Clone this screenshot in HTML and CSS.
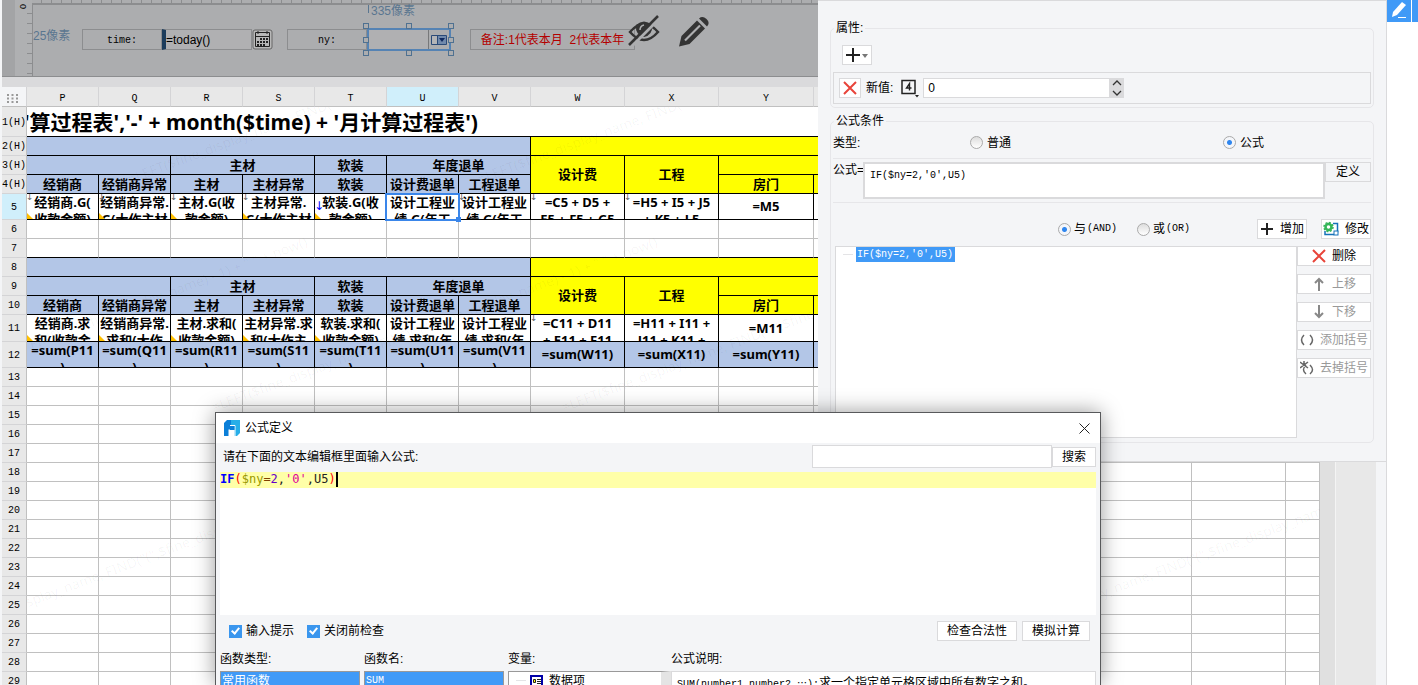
FILE: index.html
```html
<!DOCTYPE html>
<html lang="zh-CN">
<head>
<meta charset="utf-8">
<title>公式定义</title>
<link rel="stylesheet" href="styles.css">
</head>
<body>
<main class="designer">
  <section class="workspace">
    <div class="form-area">
      <div class="ruler-left"><span>0</span></div>
      <div class="form-body">
        <div class="form-canvas">
          <span class="offset-x">25像素</span>
          <label class="widget caption" for="time">time:</label>
          <input class="widget field" id="time" value="=today()">
          <button class="calendar" aria-label="日历">
            <svg viewBox="0 0 21 21" width="21" height="21"><rect x="1" y="1" width="19" height="19" rx="2" fill="#b8b8b8" stroke="#666"/><path d="M3.500 3.500h14v14h-14zM3.500 7.500h14M6 2v3M15 2v3" fill="none" stroke="#222"/><path d="M8 10h8M5 13h11M5 16h8" stroke="#222" stroke-width="2" stroke-dasharray="2 1"/></svg>
          </button>
          <label class="widget caption ny" for="ny">ny:</label>
          <div class="combo">
            <span class="offset-y">335像素</span>
            <input id="ny">
            <button aria-label="展开"><svg viewBox="0 0 16 10" width="16" height="10"><path d="M.5.5h15v9H.500z" fill="#b4b5b7" stroke="#2a4a78"/><path d="M6.500 1h8.500v8H6.500z" fill="#7089ab"/><path d="M6.500 0v10" stroke="#2a4a78"/><path d="M8 3h6l-3 4z" fill="#102a60"/></svg></button>
            <i class="grip tl"></i><i class="grip tc"></i><i class="grip tr"></i><i class="grip ml"></i><i class="grip mr"></i><i class="grip bl"></i><i class="grip bc"></i><i class="grip br"></i>
          </div>
          <div class="widget note">备注:1代表本月&nbsp; 2代表本年</div>
          <svg class="eye" viewBox="0 0 34 32" width="34" height="32"><path d="M3 17Q17 1 31 17Q17 33 3 17z" fill="none" stroke="#343434" stroke-width="2.500"/><path d="M9 10Q17 3 25 10Q26 20 17 22Q8 20 9 10z" fill="#343434"/><path d="M13 15q0-4 4-5" fill="none" stroke="#adaeb0" stroke-width="1.500"/><path d="M5 31L33 3" stroke="#adaeb0" stroke-width="3"/><path d="M2 30L31 1" stroke="#343434" stroke-width="2.500"/></svg>
          <svg class="pencil" viewBox="0 0 30 32" width="30" height="32"><path d="M0 30.500L2.500 20 18 4.500l8 8L10.500 28z" fill="#343434"/><path d="M20 2.500Q23.500-.5 27.500 3T28 10.500z" fill="#343434"/><path d="M6 24.500L21 9.500" stroke="#adaeb0" stroke-width="2.200"/></svg>
        </div>
      </div>
    </div>
    <table class="sheet">
      <colgroup><col class="c-head"><col class="c-s" span="7"><col class="c-m" span="2"><col class="c-l" span="2"><col class="c-m" span="2"><col class="c-l"><col class="c-m"><col></colgroup>
      <thead><tr><th class="corner"><svg viewBox="0 0 11 9" width="11" height="9"><path d="M0 1h11M0 4.500h11M0 8h11" stroke="#999" stroke-width="2" stroke-dasharray="2 2.500"/></svg></th><th>P</th><th>Q</th><th>R</th><th>S</th><th>T</th><th class="on">U</th><th>V</th><th>W</th><th>X</th><th>Y</th><th>Z</th><th>AA</th><th>AB</th><th>AC</th><th>AD</th><th></th></tr></thead>
      <tbody>
      <tr class="title k"><th>1(H)</th><td colspan="16">'算过程表','-' + month($time) + '月计算过程表')</td></tr>
      <tr class="k"><th>2(H)</th><td class="b" colspan="7"></td><td class="y" colspan="9"></td></tr>
      <tr class="k"><th>3(H)</th><td class="b" colspan="2"></td><td class="b" colspan="2">主材</td><td class="b">软装</td><td class="b" colspan="2">年度退单</td><td class="y" rowspan="2">设计费</td><td class="y" rowspan="2">工程</td><td class="y" colspan="7"></td></tr>
      <tr class="k"><th>4(H)</th><td class="b">经销商</td><td class="b">经销商异常</td><td class="b">主材</td><td class="b">主材异常</td><td class="b">软装</td><td class="b">设计费退单</td><td class="b">工程退单</td><td class="y">房门</td><td class="y" colspan="6"></td></tr>
      <tr class="k tall"><th class="on">5</th><td class="w arrow"><div>经销商.G(<br>收款金额)</div></td><td class="w arrow"><div>经销商异常.<br>G(大作主材</div></td><td class="w arrow"><div>主材.G(收<br>款金额)</div></td><td class="w arrow"><div>主材异常.<br>G(大作主材</div></td><td class="w arrow down"><div>软装.G(收<br>款金额)</div></td><td class="selected"><div>设计工程业<br>绩.G(年工</div></td><td class="arrow"><div>设计工程业<br>绩.G(年工</div></td><td class="arrow"><div>=C5 + D5 +<br>E5 + F5 + G5</div></td><td class="arrow"><div>=H5 + I5 + J5<br>+ K5 + L5</div></td><td>=M5</td><td></td><td></td><td></td><td></td><td></td><td></td></tr>
      <tr><th>6</th><td></td><td></td><td></td><td></td><td></td><td></td><td></td><td></td><td></td><td></td><td></td><td></td><td></td><td></td><td></td><td></td></tr>
      <tr class="kb"><th>7</th><td></td><td></td><td></td><td></td><td></td><td></td><td></td><td></td><td></td><td></td><td></td><td></td><td></td><td></td><td></td><td></td></tr>
      <tr class="k"><th>8</th><td class="b" colspan="7"></td><td class="y" colspan="9"></td></tr>
      <tr class="k"><th>9</th><td class="b" colspan="2"></td><td class="b" colspan="2">主材</td><td class="b">软装</td><td class="b" colspan="2">年度退单</td><td class="y" rowspan="2">设计费</td><td class="y" rowspan="2">工程</td><td class="y" colspan="7"></td></tr>
      <tr class="k"><th>10</th><td class="b">经销商</td><td class="b">经销商异常</td><td class="b">主材</td><td class="b">主材异常</td><td class="b">软装</td><td class="b">设计费退单</td><td class="b">工程退单</td><td class="y">房门</td><td class="y" colspan="6"></td></tr>
      <tr class="k taller"><th>11</th><td class="w"><div>经销商.求<br>和(收款金</div></td><td class="w"><div>经销商异常.<br>求和(大作</div></td><td class="w"><div>主材.求和(<br>收款金额)</div></td><td class="w"><div>主材异常.求<br>和(大作主</div></td><td class="w"><div>软装.求和(<br>收款金额)</div></td><td><div>设计工程业<br>绩.求和(年</div></td><td><div>设计工程业<br>绩.求和(年</div></td><td class="arrow"><div>=C11 + D11<br>+ E11 + F11</div></td><td><div>=H11 + I11 +<br>J11 + K11 +</div></td><td>=M11</td><td></td><td></td><td></td><td></td><td></td><td></td></tr>
      <tr class="k tall"><th>12</th><td class="b"><div>=sum(P11<br>)</div></td><td class="b"><div>=sum(Q11<br>)</div></td><td class="b"><div>=sum(R11<br>)</div></td><td class="b"><div>=sum(S11<br>)</div></td><td class="b"><div>=sum(T11<br>)</div></td><td class="b"><div>=sum(U11<br>)</div></td><td class="b"><div>=sum(V11<br>)</div></td><td class="b">=sum(W11)</td><td class="b">=sum(X11)</td><td class="b">=sum(Y11)</td><td class="b" colspan="6"></td></tr>
      <tr><th>13</th><td><td><td><td><td><td><td><td><td><td><td><td><td><td><td><td></tr>
      <tr><th>14</th><td><td><td><td><td><td><td><td><td><td><td><td><td><td><td><td></tr>
      <tr><th>15</th><td><td><td><td><td><td><td><td><td><td><td><td><td><td><td><td></tr>
      <tr><th>16</th><td><td><td><td><td><td><td><td><td><td><td><td><td><td><td><td></tr>
      <tr><th>17</th><td><td><td><td><td><td><td><td><td><td><td><td><td><td><td><td></tr>
      <tr><th>18</th><td><td><td><td><td><td><td><td><td><td><td><td><td><td><td><td></tr>
      <tr><th>19</th><td><td><td><td><td><td><td><td><td><td><td><td><td><td><td><td></tr>
      <tr><th>20</th><td><td><td><td><td><td><td><td><td><td><td><td><td><td><td><td></tr>
      <tr><th>21</th><td><td><td><td><td><td><td><td><td><td><td><td><td><td><td><td></tr>
      <tr><th>22</th><td><td><td><td><td><td><td><td><td><td><td><td><td><td><td><td></tr>
      <tr><th>23</th><td><td><td><td><td><td><td><td><td><td><td><td><td><td><td><td></tr>
      <tr><th>24</th><td><td><td><td><td><td><td><td><td><td><td><td><td><td><td><td></tr>
      <tr><th>25</th><td><td><td><td><td><td><td><td><td><td><td><td><td><td><td><td></tr>
      <tr><th>26</th><td><td><td><td><td><td><td><td><td><td><td><td><td><td><td><td></tr>
      <tr><th>27</th><td><td><td><td><td><td><td><td><td><td><td><td><td><td><td><td></tr>
      <tr><th>28</th><td><td><td><td><td><td><td><td><td><td><td><td><td><td><td><td></tr>
      <tr><th>29</th><td><td><td><td><td><td><td><td><td><td><td><td><td><td><td><td></tr>
      </tbody>
    </table>
    <svg class="watermark" width="1320" height="685" aria-hidden="true">
      <defs><text id="wm" transform="rotate(-20.500)">=LEFT($fine_display_name, FIND("(",$fine_display_name) - 1) + " " + now()</text></defs>
      <use href="#wm" transform="translate(130 184)"/><use href="#wm" transform="translate(480 184)"/>
      <use href="#wm" transform="translate(-136 412)"/><use href="#wm" transform="translate(214 412)"/><use href="#wm" transform="translate(564 412)"/>
      <use href="#wm" transform="translate(-60 640)"/><use href="#wm" transform="translate(990 640)"/>
    </svg>
  </section>
  <div class="scroll-track"></div>
  <div class="side-track"></div>
  <div class="side-edge"></div>
  <nav class="tools">
    <button aria-label="编辑"><svg viewBox="0 0 24 22" width="24" height="22"><path d="M5 17l1-5L15 2l4 3-9 10z" fill="#fff"/><path d="M11 17.500h8" stroke="#fff"/></svg></button>
    <button aria-label="更多"></button>
  </nav>
</main>

<section class="panel">
  <fieldset>
    <legend>属性:</legend>
    <button class="btn add" aria-label="添加属性"><svg viewBox="0 0 24 16" width="24" height="16"><path d="M8 1v14M1 8h14" stroke="#222" stroke-width="2"/><path d="M17 7h6l-3 4z" fill="#777"/></svg></button>
    <div class="value-row">
      <button class="btn remove" aria-label="移除"><svg viewBox="0 0 14 14" width="14" height="14"><path d="M1 1l12 12M13 1L1 13" stroke="#e8443a" stroke-width="2"/></svg></button>
      <label for="val">新值:</label>
      <svg class="kind" viewBox="0 0 19 19" width="19" height="19"><rect x="1" y="1.500" width="13" height="13" fill="none" stroke="#222" stroke-width="1.500"/><path d="M8.500 11.500v-7L5.500 9h5" fill="none" stroke="#222" stroke-width="1.400"/><path d="M14 16h4l-2 2.500z" fill="#222"/></svg>
      <input id="val" value="0">
      <div class="spin"><svg viewBox="0 0 14 20" width="14" height="20"><path d="M3 7l4-4 4 4M3 13l4 4 4-4" fill="none" stroke="#333" stroke-width="1.300"/></svg></div>
    </div>
  </fieldset>
  <fieldset class="cond">
    <legend>公式条件</legend>
    <div class="type-row">
      <span>类型:</span>
      <label><input type="radio" name="type">普通</label>
      <label><input type="radio" name="type" checked>公式</label>
    </div>
    <div class="formula-row">
      <label for="formula">公式=</label>
      <textarea id="formula">IF($ny=2,'0',U5)</textarea>
      <button class="btn define">定义</button>
    </div>
    <div class="join-row">
      <label><input type="radio" name="join" checked>与<span class="mono">(AND)</span></label>
      <label><input type="radio" name="join">或<span class="mono">(OR)</span></label>
      <button class="btn first"><svg viewBox="0 0 14 14" width="14" height="14"><path d="M7 1v12M1 7h12" stroke="#222" stroke-width="2"/></svg>增加</button>
      <button class="btn"><svg viewBox="0 0 16 16" width="16" height="16"><path d="M10 2.500h4.500v9M2 10v3.500h9" fill="none" stroke="#1572b8" stroke-width="1.500"/><rect x="11" y="10" width="4" height="4" fill="#fff" stroke="#1572b8"/><circle cx="5.500" cy="6" r="3" fill="none" stroke="#35b558" stroke-width="2.500"/><circle cx="5.500" cy="6" r="4.500" fill="none" stroke="#35b558" stroke-width="1.500" stroke-dasharray="2 1.500"/></svg>修改</button>
    </div>
    <div class="list-row">
      <div class="tree mono"><span>IF($ny=2,'0',U5)</span></div>
      <div class="actions">
        <button class="btn"><svg viewBox="0 0 14 14" width="14" height="14"><path d="M1 1l12 12M13 1L1 13" stroke="#e8443a" stroke-width="2"/></svg>删除</button>
        <button class="btn" disabled><svg viewBox="0 0 14 14" width="14" height="14"><path d="M7 14V3M3 6l4-4 4 4" fill="none" stroke="#888" stroke-width="2"/></svg>上移</button>
        <button class="btn" disabled><svg viewBox="0 0 14 14" width="14" height="14"><path d="M7 0v11M3 8l4 4 4-4" fill="none" stroke="#888" stroke-width="2"/></svg>下移</button>
        <button class="btn" disabled><svg viewBox="0 0 14 14" width="14" height="14"><path d="M4 2Q-1 7 4 12M10 2q5 5 0 10" fill="none" stroke="#666" stroke-width="1.500"/></svg>添加括号</button>
        <button class="btn" disabled><svg viewBox="0 0 14 14" width="14" height="14"><path d="M6 4Q1 9 6 13M10 4q5 5 0 9M0 1l8 6M8 1L0 7M4 0v4" fill="none" stroke="#666" stroke-width="1.500"/></svg>去掉括号</button>
      </div>
    </div>
  </fieldset>
</section>

<section class="dialog" role="dialog" aria-labelledby="dlg-title">
  <header>
    <svg viewBox="0 0 16 16" width="16" height="16"><path d="M3 0h4v16H0V3z" fill="#0b7fd8"/><path d="M7 0h9v13l-3 3H7z" fill="#27aee8"/><path d="M4.500 16V9.500h6V16z" fill="#fff"/><path d="M6 5.500h5v10.500" fill="none" stroke="#fff"/><path d="M6 6h4.500v4H6z" fill="#0b7fd8"/></svg>
    <h1 id="dlg-title">公式定义</h1>
    <button aria-label="关闭"><svg viewBox="0 0 11 11" width="11" height="11"><path d="M.5.5l10 10M10.500.5l-10 10" stroke="#222"/></svg></button>
  </header>
  <div class="search-row">
    <label for="q">请在下面的文本编辑框里面输入公式:</label>
    <input id="q"><button class="btn">搜索</button>
  </div>
  <div class="editor"><div class="line"><b class="fn">IF</b><span class="paren">(</span><span class="var">$ny</span><span class="op">=</span><span class="num">2</span>,<span class="str">'0'</span>,U5<span class="paren">)</span></div></div>
  <div class="check-row">
    <label><input type="checkbox" checked>输入提示</label>
    <label><input type="checkbox" checked>关闭前检查</label>
    <button class="btn first">检查合法性</button>
    <button class="btn">模拟计算</button>
  </div>
  <div class="columns">
    <div class="col-a"><h2>函数类型:</h2><ul class="list"><li class="picked">常用函数</li></ul></div>
    <div class="col-b"><h2>函数名:</h2><ul class="list"><li class="picked mono">SUM</li></ul></div>
    <div class="col-c"><h2>变量:</h2><ul class="list vars"><li><svg viewBox="0 0 13 12" width="13" height="12"><path d="M1 1h11v10H1z" fill="#fff" stroke="#0000a8" stroke-width="2"/><path d="M3.500 4.500h2v3h-2z" fill="#ff0" stroke="#222"/><path d="M7 4.500h4M7 6.500h4M7 8.500h4" stroke="#222"/></svg>数据项</li></ul></div>
    <div class="col-d"><h2>公式说明:</h2><div class="list desc"><span class="mono">SUM(number1,number2,<span class="cjk">…</span>):</span>求一个指定单元格区域中所有数字之和。</div></div>
  </div>
</section>
</body>
</html>
```
FILE: styles.css
```css
* { box-sizing: border-box; }
body {
  margin: 0;
  height: 100vh;
  overflow: hidden;
  position: relative;
  background: #fff;
  color: #000;
  font: 12px/16px "Liberation Sans", "Noto Sans CJK SC", sans-serif;
}
button, input, textarea { font: inherit; color: inherit; margin: 0; padding: 0; border-radius: 0; }
button { border: 0; background: none; }
svg { display: block; flex: none; }
h1, h2 { margin: 0; font-size: 12px; font-weight: 400; }
.mono { font-family: "Liberation Mono", "Noto Sans CJK SC", monospace; font-size: 10px; }
.cjk { font-family: "Noto Sans CJK SC", sans-serif; }

/* designer */
.designer { display: flex; height: 100%; padding-left: 2px; background: #f4f5f7; overflow: hidden; }
.workspace { flex: 1; min-width: 0; background: #dadadc; overflow: hidden; }
.scroll-track { width: 16px; background: #e0e0e0; border-right: 1px solid #f4f4f4; }
.side-track { width: 40px; background: #e8e8e8; }
.side-edge { width: 11px; background: #f4f5f7; border-right: 1px solid #dadadc; }
.tools { width: 31px; background: #fff; display: flex; align-items: flex-start; gap: 1px; }
.tools button { width: 24px; height: 22px; background: #409af7; }
.tools button:last-child { flex: 1; }

.form-area { display: flex; height: 77px; background: #acadaf; border-bottom: 1px solid #8c8d8f; }
.ruler-left {
  width: 30px;
  border-left: 13px solid #a3a4a6;
  background: repeating-linear-gradient(#0000 0 9px, #8c8d8f 9px 10px) right 4px / 5px 100% no-repeat #afb0b2;
  font-size: 9px;
}
.ruler-left span { display: block; width: 10px; writing-mode: vertical-rl; margin-top: 4px; margin-left: 3px; line-height: 10px; }
.form-body { flex: 1; background: repeating-linear-gradient(90deg, #0000 0 9px, #8c8d8f 9px 10px) top / 100% 4px no-repeat; padding-top: 3px; }
.form-canvas { display: flex; height: 100%; border: 2px solid #8c8d8f; border-width: 2px 0 0 1px; padding-top: 24px; white-space: nowrap; }
.offset-x { width: 49px; color: #5a7690; line-height: 14px; }
.widget { height: 21px; border: 1px solid #8c8d8f; line-height: 20px; }
.caption { width: 80px; text-align: center; font-family: "Liberation Mono", monospace; font-size: 10px; line-height: 22px; }
.field { width: 90px; background: #b0b0b2; border-left: 4px solid #1c3c5c; outline: 0; }
.calendar { width: 21px; height: 21px; }
.ny { margin-left: 14px; }
.combo { width: 84px; height: 23px; margin-top: -1px; border: 2px solid #5583b4; display: flex; align-items: center; position: relative; }
.combo input { flex: 1; min-width: 0; height: 19px; border: 0; background: #b0b0b2; border-right: 1px solid #77787a; }
.combo button { width: 20px; padding-left: 2px; }
.offset-y { position: absolute; left: -1px; top: -25px; padding-left: 2px; border-left: 1px solid #5a7690; line-height: 12px; height: 8px; color: #5a7690; }
.grip { position: absolute; width: 6px; height: 6px; border: 1px solid #4f7191; background: #acadaf; }
.tl, .tc, .tr { top: -7px; }
.bl, .bc, .br { bottom: -7px; }
.ml, .mr { top: 7px; }
.tl, .ml, .bl { left: -6px; }
.tc, .bc { left: 37px; }
.tr, .mr, .br { right: -5px; }
.note { margin-left: 19px; width: 165px; text-align: center; color: #b40000; }
.eye { margin: -14px 0 0 -8px; }
.pencil { margin: -13px 0 0 18px; }

/* spreadsheet */
.sheet { width: 100%; margin-top: 10px; table-layout: fixed; border-collapse: separate; border-spacing: 0; background: #fff; }
.c-head { width: 25px; }
.c-s { width: 72px; }
.c-m { width: 94px; }
.c-l { width: 95px; }
.sheet th { height: 19px; padding: 2px 0 0; background: #e8e8e8; border: 1px solid #d4d4d6; border-width: 0 0 1px; font: 10px/14px "Liberation Mono", monospace; white-space: nowrap; }
.sheet thead th { height: 20px; padding-top: 4px; border-right-width: 1px; border-bottom-color: #c0c0c0; }
.sheet tbody th { border-right: 1px solid #c0c0c0; }
.sheet .on { background: #d0effb; }
.sheet .corner { background: #f4f5f7; padding-left: 5px; }
.sheet td {
  height: 19px;
  padding: 0;
  border: 1px solid #c0c0c0;
  border-width: 0 1px 1px 0;
  text-align: center;
  font: 700 13px/17px "Noto Sans", "Noto Sans CJK SC", sans-serif;
  white-space: nowrap;
  overflow: hidden;
  position: relative;
}
.sheet .k td { border-color: #000; }
.sheet .kb td { border-bottom-color: #000; }
.sheet .title td { height: 30px; text-align: left; font-size: 21px; line-height: 28px; text-indent: -3px; }
.sheet .b { background: #b3c6e7; }
.sheet .y { background: #ff0; }
.sheet .tall td { height: 26px; }
.sheet .taller td { height: 27px; }
.tall div { height: 25px; overflow: hidden; }
.taller div { height: 26px; overflow: hidden; }
.w::before { content: ""; position: absolute; left: 0; bottom: 0; border: 3px solid #0000; border-left-color: #ffc000; border-bottom-color: #ffc000; }
.arrow::after { content: "↓"; position: absolute; left: -1px; top: -3px; font: 9px/12px "DejaVu Sans", sans-serif; color: #666; }
.sheet .down::after { color: #00f; top: 6px; left: -1px; font-size: 12px; }
.sheet .selected { overflow: visible; }
.selected::before { content: ""; position: absolute; inset: -1px -2px -2px; border: 2px solid #3a86ea; z-index: 1; }
.selected::after { content: ""; position: absolute; right: -3px; bottom: -3px; width: 5px; height: 5px; background: #3a86ea; z-index: 1; }
.watermark { position: absolute; left: 0; top: 0; fill: #000; fill-opacity: .04; font: 14px "Noto Sans", sans-serif; clip-path: inset(107px 0 0 27px); }

/* shared controls */
.btn { display: flex; align-items: center; justify-content: center; gap: 6px; height: 20px; border: 1px solid #dadadc; background: #fff; white-space: nowrap; }
.btn:disabled { color: #999; }
input[type=radio] { appearance: none; width: 13px; height: 13px; border: 1px solid #aaa; border-radius: 50%; background: linear-gradient(#ddd, #fff); flex: none; }
input[type=radio]:checked { background: radial-gradient(circle, #2f86ee 0 2px, #f4f6fa 3px); }
label { white-space: nowrap; }

/* property panel */
.panel { position: absolute; left: 818px; right: 31px; top: 0; padding: 19px 12px 18px; background: #f4f5f7; border: 1px solid #dadadc; border-left: 0; }
.panel fieldset { margin: 0; min-width: 0; padding: 9px 2px 3px; border: 1px solid #e6e6e9; border-radius: 5px; }
.panel legend { margin-left: 1px; padding: 0 2px; height: 16px; }
.add { width: 30px; margin-left: 9px; }
.value-row { margin-top: 7px; height: 32px; border: 1px solid #dadadc; display: flex; align-items: center; padding-left: 5px; }
.remove { width: 22px; margin-right: 5px; }
.kind { margin-left: 8px; }
.value-row input { width: 187px; height: 20px; margin-left: 3px; padding-left: 4px; border: 1px solid #dadadc; background: #fff; }
.spin { background: #dadadc; }
.panel .cond { margin-top: 5px; padding: 0 2px 4px; }
.type-row { display: flex; align-items: center; height: 30px; padding-bottom: 2px; border-bottom: 1px solid #e6e6e9; }
.type-row span { width: 137px; }
.type-row label { display: flex; align-items: center; gap: 4px; width: 253px; }
.type-row label:last-child { width: auto; }
.formula-row { display: flex; padding: 3px 0; border-bottom: 1px solid #e6e6e9; }
.formula-row label { width: 30px; }
.formula-row textarea { flex: 1; height: 37px; resize: none; border: 2px solid #dadadc; background: #fff; padding: 5px; font: 10px/14px "Liberation Mono", monospace; }
.define { width: 46px; background: #f4f5f7; }
.join-row { display: flex; align-items: center; padding: 16px 0 7px 225px; }
.join-row label { display: flex; align-items: center; gap: 3px; width: 79px; }
.join-row .mono { margin-left: -2px; }
.join-row .btn { width: 50px; margin-left: 14px; }
.join-row .first { margin-left: auto; }
.list-row { display: flex; padding-left: 2px; }
.tree { flex: 1; height: 192px; border: 1px solid #dadadc; background: linear-gradient(#e4e4e6, #e4e4e6) 7px 7px / 10px 1px no-repeat #fff; padding-left: 20px; }
.tree span { display: inline-block; background: #409af7; color: #fff; height: 15px; line-height: 15px; padding: 0 2px 0 1px; vertical-align: top; }
.actions { width: 74px; display: flex; flex-direction: column; gap: 8px; }

/* formula dialog */
.dialog { position: absolute; left: 215px; right: 317px; top: 412px; bottom: 0; overflow: hidden; border: 1px solid #58595b; border-bottom: 0; background: #f4f5f7; box-shadow: 0 0 20px rgba(0, 0, 0, .4); }
.dialog header { display: flex; align-items: center; gap: 5px; height: 30px; padding: 0 10px 0 8px; background: #fff; }
.dialog header button { margin-left: auto; }
.search-row { display: flex; align-items: center; height: 29px; padding: 0 4px 2px 7px; }
.search-row input { width: 240px; height: 23px; margin-left: auto; border: 1px solid #dadadc; background: #fff; }
.search-row .btn { width: 44px; }
.editor { height: 143px; margin: 0 4px; background: #fff; }
.line { display: flex; height: 16px; background: #ffffa8; font: 12px/14px "DejaVu Sans Mono", monospace; color: #222; }
.line::after { content: ""; width: 2px; height: 15px; background: #000; }
.fn { color: #00f; } .paren { color: #f00; } .var { color: #999900; } .op { color: #804000; } .num { color: #6400c8; } .str { color: #dc009c; }
.check-row { display: flex; align-items: center; height: 30px; padding: 2px 10px 0 13px; }
.check-row label { display: flex; align-items: center; gap: 4px; margin-right: 13px; }
.check-row input { appearance: none; width: 13px; height: 13px; background: #3a96ee; display: flex; justify-content: center; }
.check-row input::after { content: ""; width: 4px; height: 8px; margin-top: 1px; border: 2px solid #fff; border-width: 0 2px 2px 0; transform: rotate(40deg); box-sizing: content-box; width: 3px; height: 6px; }
.check-row .btn { width: 68px; margin-left: 5px; }
.check-row .first { width: 80px; margin-left: auto; }
.columns { display: flex; padding: 0 4px; }
.columns > div { display: flex; flex-direction: column; }
.columns h2 { height: 26px; line-height: 28px; }
.list { flex: 1; list-style: none; margin: 0; padding: 0; border: 1px solid #999; background: #fff; white-space: nowrap; overflow: hidden; }
.col-a, .col-b { width: 140px; margin-right: 4px; }
.col-c { width: 163px; }
.col-d { flex: 1; min-width: 0; }
.picked { background: #409af7; color: #fff; padding-left: 1px; line-height: 18px; }
.vars { border-right: 10px solid #e4e4e4; }
.vars li { display: flex; align-items: center; gap: 6px; padding-left: 21px; line-height: 18px; background: linear-gradient(#e4e4e6, #e4e4e6) 7px 8px / 10px 1px no-repeat; }
.desc { border-color: #dadadc; padding: 3px 5px; }
```
